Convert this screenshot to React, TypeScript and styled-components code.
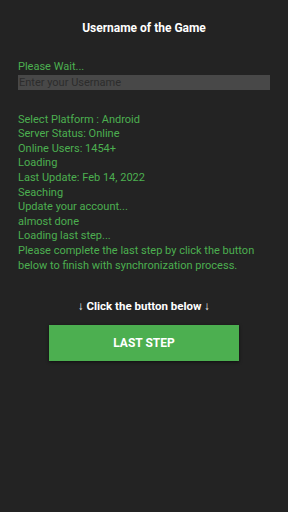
import styled, { createGlobalStyle } from 'styled-components';

const GlobalStyle = createGlobalStyle`
  html, body {
    margin: 0;
    padding: 0;
    background: #232323;
  }
  body {
    font-family: Roboto, 'Liberation Sans', sans-serif;
  }
`;

const statusLines = [
  'Select Platform : Android',
  'Server Status: Online',
  'Online Users: 1454+',
  'Loading',
  'Last Update: Feb 14, 2022',
  'Seaching',
  'Update your account...',
  'almost done',
  'Loading last step...',
  'Please complete the last step by click the button below to finish with synchronization process.',
];

export default function App() {
  return (
    <>
      <GlobalStyle />
      <StyledPage>
        <StyledTitle>Username of the Game</StyledTitle>
        <StyledForm>
          <StyledGreen>Please Wait...</StyledGreen>
          <StyledInput placeholder="Enter your Username" />
        </StyledForm>
        <StyledLog>
          {statusLines.map((line) => (
            <StyledGreen key={line}>{line}</StyledGreen>
          ))}
        </StyledLog>
        <StyledHint>↓ Click the button below ↓</StyledHint>
        <StyledButton>LAST STEP</StyledButton>
      </StyledPage>
    </>
  );
}

const StyledPage = styled.div`
  width: 288px;
  height: 512px;
  box-sizing: border-box;
  padding: 20px 18px 0;
  display: flex;
  flex-direction: column;
  background: #232323;
`;

const StyledTitle = styled.h1`
  margin: 0;
  color: #ffffff;
  font-size: 12px;
  font-weight: 700;
  line-height: 16px;
  text-align: center;
`;

const StyledForm = styled.div`
  margin-top: 24px;
  display: flex;
  flex-direction: column;
`;

const StyledGreen = styled.p`
  margin: 0;
  color: #4caf50;
  font-size: 11px;
  line-height: 14.6px;
`;

const StyledInput = styled.input`
  box-sizing: border-box;
  width: 252px;
  height: 15px;
  margin: 0;
  padding: 0 1px;
  border: none;
  outline: none;
  background: #484848;
  color: #cccccc;
  font-family: Roboto, 'Liberation Sans', sans-serif;
  font-size: 11px;

  &::placeholder {
    color: #2c2c2c;
  }
`;

const StyledLog = styled.div`
  margin-top: 23px;
  display: flex;
  flex-direction: column;
`;

const StyledHint = styled.p`
  margin: 25px 0 0;
  color: #ffffff;
  font-size: 11.5px;
  font-weight: 700;
  line-height: 16px;
  text-align: center;
`;

const StyledButton = styled.button`
  align-self: center;
  margin-top: 11px;
  width: 190px;
  height: 36px;
  border: none;
  background: #4caf50;
  color: #ffffff;
  font-family: Roboto, 'Liberation Sans', sans-serif;
  font-size: 12px;
  font-weight: 700;
  box-shadow: 0 1px 3px rgba(0, 0, 0, 0.6);
  cursor: pointer;
`;
